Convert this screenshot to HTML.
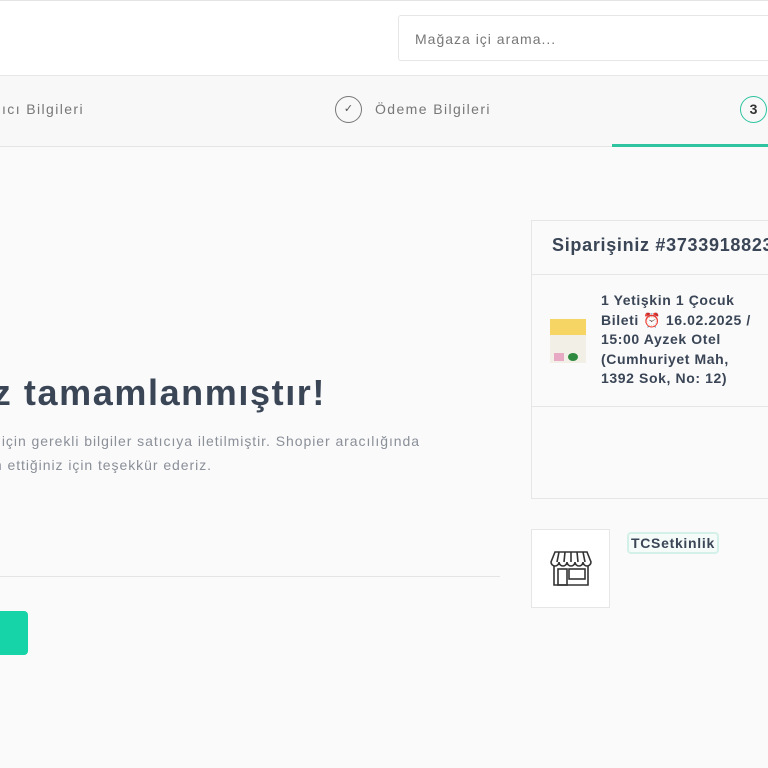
<!DOCTYPE html>
<html><head><meta charset="utf-8"><style>
*{margin:0;padding:0;box-sizing:border-box}
html,body{width:768px;height:768px;overflow:hidden}
body{background:#fafafa;font-family:"Liberation Sans",sans-serif;position:relative}
.a{position:absolute;white-space:nowrap}
</style></head><body>
<div class="a" style="left:0;top:0;width:768px;height:76px;background:#fff;border-top:1px solid #e4e4e4;border-bottom:1px solid #e8e8e8"></div>
<div class="a" style="left:398px;top:15px;width:370px;height:46px;border:1px solid #e6e6e6;border-right:none;border-radius:3px 0 0 3px;background:#fff;font-size:14px;letter-spacing:1px;color:#777;padding:15px 16px">Mağaza içi arama...</div>
<div class="a" style="left:0;top:76px;width:768px;height:71px;background:#f8f8f8;border-bottom:1px solid #e4e4e4"></div>
<div class="a" style="right:684px;top:101px;font-size:14px;letter-spacing:1.4px;color:#777">Alıcı Bilgileri</div>
<div class="a" style="left:335px;top:96px;width:27px;height:27px;border:1px solid #777;border-radius:50%;font-size:11px;color:#555;text-align:center;line-height:25px">✓</div>
<div class="a" style="left:375px;top:101px;font-size:14px;letter-spacing:1.4px;color:#777">Ödeme Bilgileri</div>
<div class="a" style="left:740px;top:96px;width:27px;height:27px;border:1.5px solid #2ec4a0;border-radius:50%;font-size:14px;font-weight:bold;color:#333;text-align:center;line-height:24px">3</div>
<div class="a" style="left:612px;top:144px;width:156px;height:3px;background:#2ec4a0"></div>
<div class="a" style="right:442px;top:372px;font-size:36px;letter-spacing:1.6px;font-weight:bold;color:#3a4556">Siparişiniz tamamlanmıştır!</div>
<div class="a" style="right:348px;top:433px;font-size:14px;letter-spacing:0.95px;color:#8a8f98">için gerekli bilgiler satıcıya iletilmiştir. Shopier aracılığında</div>
<div class="a" style="right:556px;top:457px;font-size:14px;letter-spacing:0.95px;color:#8a8f98">tercih ettiğiniz için teşekkür ederiz.</div>
<div class="a" style="left:0;top:576px;width:500px;height:1px;background:#e4e4e4"></div>
<div class="a" style="left:0;top:611px;width:28px;height:44px;background:#16d3a8;border-radius:0 4px 4px 0"></div>
<div class="a" style="left:531px;top:220px;width:237px;height:279px;border:1px solid #e6e6e6;border-right:none;background:#fafafa"></div>
<div class="a" style="left:532px;top:274px;width:236px;height:1px;background:#e6e6e6"></div>
<div class="a" style="left:552px;top:235px;font-size:18px;letter-spacing:0.7px;font-weight:bold;color:#3a4556">Siparişiniz #3733918823</div>
<div class="a" style="left:532px;top:406px;width:236px;height:1px;background:#e6e6e6"></div>
<div class="a" style="left:550px;top:319px;width:36px;height:44px;background:#f2efe6">
<div style="height:16px;background:#f7d564"></div><div style="margin-top:18px;display:flex;gap:4px;padding:0 4px"><div style="width:10px;height:8px;background:#e8a9c4"></div><div style="width:10px;height:8px;background:#2f8a40;border-radius:50%"></div></div></div>
<div class="a" style="left:601px;top:291px;font-size:14px;letter-spacing:0.6px;font-weight:bold;color:#3a4556;line-height:19.5px">1 Yetişkin 1 Çocuk<br>Bileti <span style="color:#e05a3a">⏰</span> 16.02.2025 /<br>15:00 Ayzek Otel<br>(Cumhuriyet Mah,<br>1392 Sok, No: 12)</div>
<div class="a" style="left:531px;top:529px;width:79px;height:79px;border:1px solid #e6e6e6;background:#fff"></div>
<svg class="a" style="left:549px;top:550px" width="44" height="38" viewBox="0 0 44 38" fill="none" stroke="#333" stroke-width="1.6">
<path d="M6 2h32l4 10a4 4 0 0 1-8 0 4 4 0 0 1-8 0 4 4 0 0 1-8 0 4 4 0 0 1-8 0 4 4 0 0 1-8 0z"/>
<path d="M10 2l-2 10M16 2l-1 10M22 2v10M28 2l1 10M34 2l2 10"/>
<path d="M5 16v19h34V16M5 35h34"/><rect x="9" y="19" width="9" height="16"/><rect x="20" y="19" width="16" height="10"/>
</svg>
<div class="a" style="left:627px;top:532px;padding:1px 2px;border:2px solid #d4f1e9;border-radius:4px;background:#f4fbf9;font-size:14px;letter-spacing:0.7px;font-weight:bold;color:#3a4556">TCSetkinlik</div>
</body></html>
